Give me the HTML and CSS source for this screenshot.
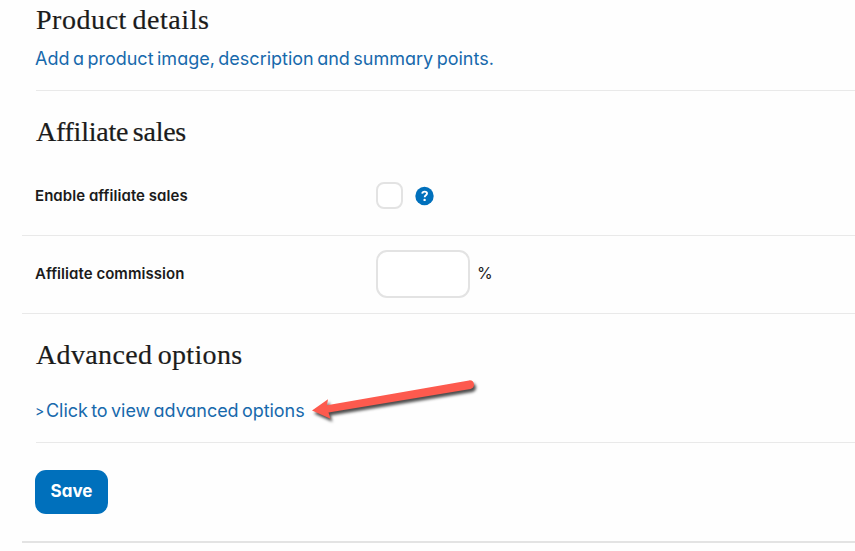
FILE: index.html
```
<!DOCTYPE html>
<html lang="en">
<head>
    <meta charset="UTF-8">
    <title>Edit product</title>
    <link rel="stylesheet" href="styles.css">
</head>
<body>
<form class="product-form">
    <section class="section details">
        <h2 class="details-title">Product details</h2>
        <a class="link details-link" href="#">Add a product image, description and summary points.</a>
    </section>
    <section class="affiliate">
        <h2 class="affiliate-title">Affiliate sales</h2>
        <div class="row row-enable">
            <label class="label" for="enable">Enable affiliate sales</label>
            <input class="check" type="checkbox" id="enable">
            <svg class="help" width="20" height="20" viewBox="0 0 20 20">
                <circle cx="10.5" cy="10" r="9.2" fill="#0070bc"/>
                <path d="M8.2 7.6c.2-1.4 1.1-2 2.4-2 1.4 0 2.4.7 2.4 1.9 0 1.8-2.3 1.8-2.3 3.7" fill="none" stroke="#fff" stroke-width="1.9"/>
                <circle cx="10.6" cy="13.9" r="1.2" fill="#fff"/>
            </svg>
        </div>
        <div class="row row-commission">
            <label class="label" for="commission">Affiliate commission</label>
            <input class="field" type="text" id="commission">
            <span class="unit">%</span>
        </div>
    </section>
    <section class="section advanced">
        <h2 class="advanced-title">Advanced options</h2>
        <a class="link advanced-link" href="#"><span class="caret">&gt;</span>Click to view advanced options</a>
        <svg class="arrow" width="180" height="54" viewBox="0 0 180 54">
            <path d="M3 36.5L19 25.3L18 31.3L160 6.4Q164.5 6 165 10.5Q165 14 161.5 15L19.5 38.5L21.5 44.7Z" fill="#fd5a4e"/>
        </svg>
    </section>
    <div class="actions">
        <button class="save" type="button">Save</button>
    </div>
</form>
</body>
</html>
```
FILE: styles.css
```
* {
    margin: 0;
    padding: 0;
    box-sizing: border-box;
}

body {
    background: #fefefe;
    color: #1b1b1b;
    font-family: Inter, "Liberation Sans", sans-serif;
    font-feature-settings: "cv11" 1;
    overflow: hidden;
}

.product-form {
    height: 543px;
    margin-left: 22px;
    border-bottom: 2px solid #e3e3e3;
}

.section {
    margin-left: 14px;
    border-bottom: 1px solid #e9e9e9;
}

h2 {
    font-family: "Liberation Serif", serif;
    font-size: 28px;
    font-weight: normal;
    line-height: 32px;
    white-space: nowrap;
    word-spacing: -2px;
    -webkit-text-stroke: 0.2px #1b1b1b;
}

.link {
    display: block;
    margin-left: -1px;
    color: #1769ac;
    font-size: 18px;
    line-height: 24px;
    text-decoration: none;
    white-space: nowrap;
    word-spacing: -1.6px;
}

.details {
    height: 91px;
    padding-top: 4px;
}

.details-title {
    letter-spacing: 0.55px;
}

.details-link {
    margin-top: 11px;
}

.affiliate-title {
    margin: 25px 0 0 14px;
    letter-spacing: -0.25px;
}

.row {
    display: flex;
    align-items: center;
    padding-left: 14px;
    border-bottom: 1px solid #e9e9e9;
}

.row-enable {
    height: 88px;
    padding-top: 8px;
}

.row-commission {
    height: 78px;
    padding-bottom: 2px;
}

.label {
    width: 341px;
    margin-left: -1px;
    font-size: 15px;
    font-weight: 600;
    letter-spacing: 0.05px;
}

.check {
    appearance: none;
    width: 27px;
    height: 27px;
    border: 2px solid #e3e3e3;
    border-radius: 8px;
    background: #fff;
}

.help {
    margin: 1px 0 0 11px;
}

.field {
    width: 94px;
    height: 48px;
    border: 2px solid #e3e3e3;
    border-radius: 11px;
    background: #fff;
}

.unit {
    margin-left: 7px;
    padding-bottom: 1px;
    font-size: 16px;
}

.advanced {
    position: relative;
    height: 129px;
    padding-top: 25px;
}

.advanced-title {
    letter-spacing: 0.35px;
}

.advanced-link {
    display: flex;
    margin-top: 28px;
    letter-spacing: -0.05px;
}

.caret {
    width: 11px;
    font-size: 14px;
}

/* pointer drawn over the advanced link */
.arrow {
    position: absolute;
    left: 273px;
    top: 60px;
    filter: drop-shadow(2px 3px 1.5px rgba(0, 0, 0, 0.7));
}

.actions {
    padding: 27px 0 0 13px;
}

.save {
    width: 73px;
    height: 44px;
    padding-bottom: 2px;
    border: none;
    border-radius: 11px;
    background: #0070bc;
    color: #fff;
    font-family: inherit;
    font-feature-settings: inherit;
    font-size: 17px;
    font-weight: 700;
}
```
